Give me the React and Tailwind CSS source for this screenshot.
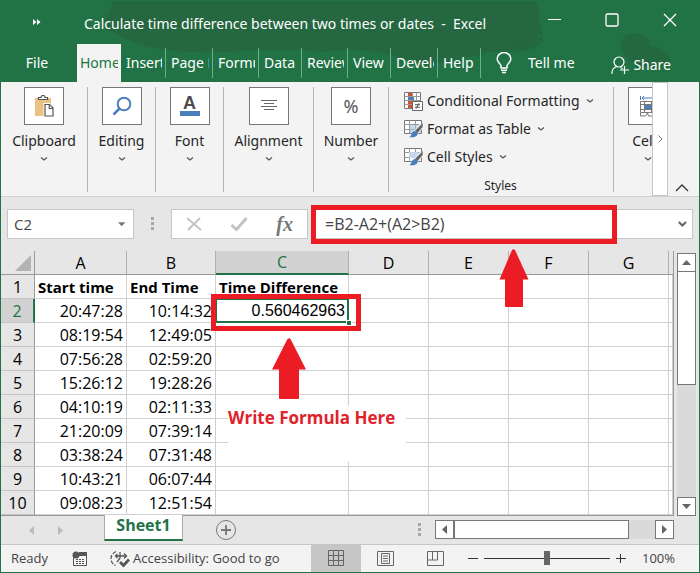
import React, { useState } from 'react';

const TABS = [
    { label: 'Insert', width: 'w-[45px]' },
    { label: 'Page Layout', width: 'w-[47px]' },
    { label: 'Formulas', width: 'w-[46px]' },
    { label: 'Data', width: 'w-[43px]' },
    { label: 'Review', width: 'w-[46px]' },
    { label: 'View', width: 'w-[43px]' },
    { label: 'Developer', width: 'w-[47px]' },
    { label: 'Help', width: 'w-[43px]' },
];

const COLUMNS = ['A', 'B', 'C', 'D', 'E', 'F', 'G'];

const ROWS = [
    ['20:47:28', '10:14:32'],
    ['08:19:54', '12:49:05'],
    ['07:56:28', '02:59:20'],
    ['15:26:12', '19:28:26'],
    ['04:10:19', '02:11:33'],
    ['21:20:09', '07:39:14'],
    ['03:38:24', '07:31:48'],
    ['10:43:21', '06:07:44'],
    ['09:08:23', '12:51:54'],
];

const Chevron = () => (
    <svg width="8" height="6" viewBox="0 0 8 6" fill="none" stroke="#555" strokeWidth="1.3">
        <path d="M1 1.5 4 4 7 1.5" />
    </svg>
);

const Dots = () => (
    <svg width="3" height="14" viewBox="0 0 3 14" fill="#a6a6a6">
        <path d="M0 0h3v3H0zM0 5h3v3H0zM0 10h3v3H0z" />
    </svg>
);

const ClipboardIcon = () => (
    <svg width="20" height="22" viewBox="0 0 20 22" fill="none">
        <path d="M1 3h16v18H1z" fill="#eac282" />
        <path d="M4.500 4.500V2.500H7a2 2 0 0 1 4 0h2.500v2z" fill="#fff" stroke="#555" strokeWidth="1.200" />
        <path d="M11 9.500h4.500l3.500 3.500v8h-8z" fill="#fff" stroke="#fff" strokeWidth="3" />
        <path d="M11 9.500h4.500l3.500 3.500v8h-8z" fill="#fff" stroke="#555" strokeWidth="1.200" />
        <path d="M15.200 9.500v4H19" stroke="#555" strokeWidth="1.100" />
    </svg>
);

const SearchIcon = () => (
    <svg width="20" height="20" viewBox="0 0 20 20" fill="none" stroke="#4a7ebb" strokeWidth="2">
        <circle cx="12" cy="8" r="6.300" />
        <path d="M7.500 12.500 1.500 18.500" strokeWidth="2.500" />
    </svg>
);

const FontIcon = () => (
    <div className="flex w-5 flex-col items-center">
        <span className="h-[15px] font-['Liberation_Sans'] text-lg leading-[15px] font-bold text-[#4d4d4d]">A</span>
        <span className="h-[5px] w-5 bg-[#4a7ebb]" />
    </div>
);

const AlignIcon = () => (
    <svg width="16" height="12" viewBox="0 0 16 12" stroke="#666">
        <path d="M0 .5h16M3 3.500h10M0 6.500h16M3 9.500h10" />
    </svg>
);

const CellsIcon = () => (
    <svg width="18" height="22" viewBox="0 0 18 22" fill="none">
        <path d="M1.500 1v4M16.500 1v4M3 3h12M5 1 3 3l2 2M13 1l2 2-2 2" stroke="#4a7ebb" />
        <path d="M1.500 6.500h15v11h-15zM1.500 9.500h15M1.500 14.500h15M5.500 6.500v11M12.500 6.500v11" stroke="#777" />
        <path d="M6 10h6v4H6z" fill="#4a7ebb" />
        <path d="M1.500 18v3h5l2-3 1 3h5l2-3" stroke="#777" />
    </svg>
);

const GridBase = () => (
    <>
        <path d="M.5.5h17v13H.5z" fill="#fff" stroke="#777" />
        <path d="M.5 4.500h17M.5 9.500h17M5.500.5v13M11.500.5v13" stroke="#999" />
    </>
);

const Brush = () => (
    <>
        <path d="M18.500 4.500 12 12.500" stroke="#f3f3f3" strokeWidth="5" />
        <path d="m18.800 3-.2 4-5 6-2.500-2.200z" fill="#666" />
        <path d="M10.800 11c1.700.2 2.900 1.400 2.900 2.900-.5 2.700-3.700 3.700-8.700 3.300 2-1 2-2.200 3-4 .6-1.300 1.600-2.300 2.800-2.200z" fill="#4a7ebb" />
    </>
);

const ConditionalIcon = () => (
    <svg width="19" height="19" viewBox="0 0 19 19" fill="none">
        <path d="M.5.5h16v16H.5z" fill="#fff" stroke="#777" />
        <path d="M.5 4.500h16M.5 8.500h16M.5 12.500h16M4.500.5v16M12.500.5v16M8.500.5v16" stroke="#999" />
        <path d="M4 1h4v3H4zM4 9h4v3H4zM4 13h4v3H4z" fill="#d2522c" />
        <path d="M4 5h6v3H4z" fill="#4a7ebb" />
        <path d="M8.500 9.500h10v9h-10z" fill="#fff" stroke="#666" />
        <path d="M11 12.700h5M11 15.200h5M15 11.200 12 16.800" stroke="#555" />
    </svg>
);

const FormatTableIcon = () => (
    <svg width="19" height="18" viewBox="0 0 19 18" fill="none">
        <GridBase />
        <path d="M6 5h11v8H6z" fill="#c5d7ea" />
        <path d="M6 9.500h11M11.500 5v8" stroke="#9ab2cc" />
        <Brush />
    </svg>
);

const CellStylesIcon = () => (
    <svg width="19" height="18" viewBox="0 0 19 18" fill="none">
        <GridBase />
        <path d="M5 4h9v6H5z" fill="#c5d7ea" />
        <Brush />
    </svg>
);

const RibbonGroup = ({ label, width, children }) => (
    <div className={`flex shrink-0 flex-col items-center border-r border-[#b5b5b5] ${width}`}>
        <button type="button" className="flex flex-col items-center">
            <span className="flex h-[38px] w-10 items-center justify-center border border-[#767676] bg-white">
                {children}
            </span>
            <span className="mt-1 h-6 text-sm leading-6">{label}</span>
            <span className="mt-[3px]"><Chevron /></span>
        </button>
    </div>
);

const StyleItem = ({ label, icon }) => (
    <button type="button" className="flex h-7 items-center whitespace-nowrap">
        {icon}
        <span className="mr-[6px] ml-1 text-sm">{label}</span>
        <Chevron />
    </button>
);

const Header = () => (
    <header className="relative shrink-0 overflow-hidden bg-[#217346] text-white">
        <svg className="absolute inset-0 h-full w-full" viewBox="0 0 700 82" preserveAspectRatio="none" fill="#25653f">
            <path d="M112 1h422c10 8 2 20 10 34h-5c-12 20-40 10-60 20l-60 12c-20-16-70-20-95-15-60-6-90 2-130 0-50 0-72-15-94-26 6-10 12-18 12-25z" opacity=".85" />
            <path d="M480 46c20 2 44-2 62-9 8 8-18 20-62 13zM622 46c0-20 30-14 28 0 14 0 30 16 16 22-18 6-44-8-44-22z" opacity=".8" />
        </svg>
        <div className="relative flex h-11 items-center pl-8">
            <svg width="8" height="6" viewBox="0 0 8 6" fill="#fff">
                <path d="m0 0 3.500 3L0 6zM4 0l3.500 3L4 6z" />
            </svg>
            <h1 className="ml-[43px] pt-1 text-sm whitespace-pre">Calculate time difference between two times or dates  -  Excel</h1>
            <div className="ml-auto flex items-center gap-11 pr-[22px] pb-1">
                <button type="button" aria-label="Minimize">
                    <svg width="13" height="14" viewBox="0 0 13 14" stroke="#fff"><path d="M0 6.500h13" /></svg>
                </button>
                <button type="button" aria-label="Maximize">
                    <svg width="14" height="14" viewBox="0 0 14 14" fill="none" stroke="#fff" strokeWidth="1.300"><rect x="1" y="1" width="12" height="12" rx="1.500" /></svg>
                </button>
                <button type="button" aria-label="Close">
                    <svg width="14" height="14" viewBox="0 0 14 14" stroke="#fff" strokeWidth="1.300"><path d="m1 1 12 12M13 1 1 13" /></svg>
                </button>
            </div>
        </div>
        <nav className="relative flex h-[38px] text-sm">
            <button type="button" className="w-[76px] shrink-0 pr-1">File</button>
            <button type="button" className="w-11 shrink-0 bg-[#f3f3f3] px-[3px] text-[#217346]">
                <span className="block overflow-hidden text-left">Home</span>
            </button>
            <div className="flex py-1">
                {TABS.map((tab) => (
                    <button key={tab.label} type="button" className={`shrink-0 border-r border-[#6fae8a] pr-[3px] pl-[5px] text-left ${tab.width}`}>
                        <span className="block overflow-hidden whitespace-nowrap">{tab.label}</span>
                    </button>
                ))}
            </div>
            <button type="button" className="ml-[15px] flex items-center gap-4 whitespace-nowrap">
                <svg width="16" height="22" viewBox="0 0 16 22" fill="none" stroke="#fff" strokeWidth="1.500">
                    <path d="M5 16v-2.500C4 11.500 1.200 10 1.200 7a6.600 6.300 0 0 1 13.600 0c0 3-2.800 4.500-3.800 6.500V16zM5 18.300h6M6 20.500h4" />
                </svg>
                Tell me
            </button>
            <button type="button" className="mr-7 ml-auto flex items-center gap-1 pt-1">
                <svg width="18" height="19" viewBox="0 0 18 19" fill="none" stroke="#fff" strokeWidth="1.200">
                    <circle cx="8" cy="6" r="5" />
                    <path d="M.8 18c0-4 2-6.500 4.700-7.500M9.500 11.500c1 .4 1.500.8 2 1.500M13.500 10v8M9 14h9" />
                </svg>
                Share
            </button>
        </nav>
    </header>
);

const Ribbon = () => (
    <section className="flex h-[115px] shrink-0 border-b border-[#d0d0d0] bg-[#f3f3f3] text-[#262626]">
        <div className="flex min-w-0 flex-1 overflow-hidden pt-[5px] pb-1">
            <RibbonGroup label="Clipboard" width="w-[87px]"><ClipboardIcon /></RibbonGroup>
            <RibbonGroup label="Editing" width="w-[68px]"><SearchIcon /></RibbonGroup>
            <RibbonGroup label="Font" width="w-[68px]"><FontIcon /></RibbonGroup>
            <RibbonGroup label="Alignment" width="w-[90px]"><AlignIcon /></RibbonGroup>
            <RibbonGroup label="Number" width="w-[75px]">
                <span className="text-lg text-[#555]">%</span>
            </RibbonGroup>
            <div className="flex w-[225px] shrink-0 flex-col border-r border-[#b5b5b5] pl-[15px]">
                <StyleItem label="Conditional Formatting" icon={<ConditionalIcon />} />
                <StyleItem label="Format as Table" icon={<FormatTableIcon />} />
                <StyleItem label="Cell Styles" icon={<CellStylesIcon />} />
                <span className="mt-auto pr-4 text-center text-xs leading-3">Styles</span>
            </div>
            <RibbonGroup label="Cells" width="w-[68px]"><CellsIcon /></RibbonGroup>
        </div>
        <button type="button" aria-label="Scroll ribbon" className="flex w-4 items-center justify-center border border-[#c6c6c6] bg-white">
            <svg width="5" height="8" viewBox="0 0 5 8" fill="none" stroke="#777"><path d="m.5.5 3.500 3.500L.5 7.500" /></svg>
        </button>
        <button type="button" aria-label="Collapse ribbon" className="flex w-[31px] items-end justify-center pr-1 pb-1">
            <svg width="14" height="8" viewBox="0 0 14 8" fill="none" stroke="#333" strokeWidth="1.300"><path d="m1 7 6-6 6 6" /></svg>
        </button>
    </section>
);

const FormulaBar = () => {
    const [formula, setFormula] = useState('=B2-A2+(A2>B2)');

    return (
        <section className="relative flex h-[54px] shrink-0 items-start pt-3 pr-[6px] pl-[6px] text-[#444]">
            <div className="flex h-[30px] w-[127px] shrink-0 items-center border border-[#c6c6c6] bg-white pr-2 pl-[6px]">
                <input aria-label="Name box" defaultValue="C2" className="w-full min-w-0 text-[15px] outline-none" />
                <svg width="8" height="5" viewBox="0 0 8 5" fill="#777"><path d="M0 0h8L4 4.500z" /></svg>
            </div>
            <div className="flex h-[30px] w-[37px] shrink-0 items-center justify-center"><Dots /></div>
            <div className="flex h-[30px] w-[137px] shrink-0 items-center justify-between border border-[#c6c6c6] bg-white px-[14px]">
                <button type="button" aria-label="Cancel">
                    <svg width="16" height="14" viewBox="0 0 16 14" stroke="#c3c3c3" strokeWidth="2"><path d="m1 1 14 12M14 1 2 13" /></svg>
                </button>
                <button type="button" aria-label="Enter">
                    <svg width="18" height="14" viewBox="0 0 18 14" fill="none" stroke="#c3c3c3" strokeWidth="3"><path d="m1.500 8 5 4.500L16.500 1" /></svg>
                </button>
                <button type="button" className="font-['Liberation_Serif'] text-xl leading-5 font-bold text-[#777] italic">fx</button>
            </div>
            <div className="ml-1 flex h-[30px] min-w-0 flex-1 items-center border border-[#c6c6c6] bg-white pr-[5px] pl-3">
                <input
                    aria-label="Formula"
                    className="w-full min-w-0 text-base outline-none"
                    value={formula}
                    onChange={(e) => setFormula(e.target.value)}
                />
                <svg width="9" height="6" viewBox="0 0 9 6" fill="none" stroke="#666" strokeWidth="2.200"><path d="m.8 1 3.700 3.500L8.200 1" /></svg>
            </div>
            {/* Formula highlight and its arrow */}
            <div className="pointer-events-none absolute top-2 left-[310px] h-[39px] w-[306px] border-[5px] border-[#ec1c24]" />
            <svg className="pointer-events-none absolute top-[52px] left-[498px] z-10" width="30" height="58" viewBox="0 0 30 58" fill="#ec1c24">
                <path d="M13 1q1.500-1.500 3 0l13.500 29.500H24V57q0 1-1 1H7q-1 0-1-1V30.500H.5z" />
            </svg>
        </section>
    );
};

const ResultCell = () => (
    <td className="relative border-r border-b border-[#d0d0d0] pr-[3px] text-right font-['Liberation_Sans'] text-base/5">
        0.560462963
        <div className="absolute -inset-px border-2 border-[#217346]" />
        <div className="absolute -right-1 -bottom-1 h-[6px] w-[6px] border border-white bg-[#217346]" />
        <div className="absolute -top-[5px] -left-[5px] h-[37px] w-[150px] border-[5px] border-[#ec1c24]" />
        <svg className="absolute top-[39px] left-14" width="34" height="61" viewBox="0 0 34 61" fill="#ec1c24">
            <path d="M15.500 1q1.500-1.500 3 0L34 31.500h-7V60q0 1-1 1H8q-1 0-1-1V31.500H0z" />
        </svg>
        <div className="absolute top-[107px] left-3 h-14 w-[178px] bg-white text-left font-['Open_Sans'] text-[17px] leading-6 font-bold whitespace-nowrap text-[#e0222c]">
            Write Formula Here
        </div>
    </td>
);

const Sheet = () => (
    <div className="min-w-0 flex-1 border-r border-b border-[#999]">
        <table className="w-full table-fixed border-separate border-spacing-0 text-base/5 text-black">
            <colgroup>
                <col className="w-[34px]" />
                <col className="w-[92px]" />
                <col className="w-[89px]" />
                <col className="w-[133px]" />
                <col className="w-20" />
                <col className="w-20" />
                <col className="w-20" />
                <col className="w-20" />
                <col />
            </colgroup>
            <thead>
                <tr className="h-6 bg-[#e6e6e6]">
                    <th className="border-r border-b border-[#999] p-0">
                        <svg className="mr-[3px] ml-auto" width="16" height="16" viewBox="0 0 16 16" fill="#b4b4b4"><path d="M16 0v16H0z" /></svg>
                    </th>
                    {COLUMNS.map((name) => (
                        <th
                            key={name}
                            scope="col"
                            className={name === 'C'
                                ? 'border-r border-b-2 border-r-[#b0b0b0] border-b-[#217346] bg-[#d2d2d2] p-0 font-normal text-[#217346]'
                                : 'border-r border-b border-r-[#b0b0b0] border-b-[#999] p-0 font-normal'}
                        >
                            {name}
                        </th>
                    ))}
                    <th className="border-b border-[#999] p-0" />
                </tr>
            </thead>
            <tbody className="bg-white">
                <tr className="h-6 text-left">
                    <th scope="row" className="border-r border-b border-r-[#999] border-b-[#c4c4c4] bg-[#e6e6e6] p-0 text-center font-normal">1</th>
                    {['Start time', 'End Time', 'Time Difference', '', '', '', '', ''].map((text, i) => (
                        <td key={i} className="border-r border-b border-[#d0d0d0] py-0 pr-0 pl-[3px] text-[15px] leading-5 font-bold whitespace-nowrap">{text}</td>
                    ))}
                </tr>
                {ROWS.map((row, i) => (
                    <tr key={row[0]} className="h-6">
                        <th
                            scope="row"
                            className={i === 0
                                ? 'border-r-2 border-b border-r-[#217346] border-b-[#c4c4c4] bg-[#d2d2d2] p-0 font-normal text-[#217346]'
                                : 'border-r border-b border-r-[#999] border-b-[#c4c4c4] bg-[#e6e6e6] p-0 font-normal'}
                        >
                            {i + 2}
                        </th>
                        {row.map((time) => (
                            <td key={time} className="border-r border-b border-[#d0d0d0] py-0 pr-[3px] pl-0 text-right">{time}</td>
                        ))}
                        {i === 0 ? <ResultCell /> : <td className="border-r border-b border-[#d0d0d0]" />}
                        {[0, 1, 2, 3, 4].map((n) => (
                            <td key={n} className="border-r border-b border-[#d0d0d0] p-0" />
                        ))}
                    </tr>
                ))}
            </tbody>
        </table>
    </div>
);

const ScrollButton = ({ label, path }) => (
    <button type="button" aria-label={label} className="flex h-[19px] w-[19px] shrink-0 items-center justify-center border border-[#777] bg-white">
        <svg width="9" height="9" viewBox="0 0 9 9" fill="#666"><path d={path} /></svg>
    </button>
);

const SheetBar = () => (
    <div className="flex h-[29px] shrink-0 items-start border-b border-[#c6c6c6]">
        <div className="flex h-7 w-[103px] shrink-0 items-center gap-6 pl-7">
            <svg width="5" height="9" viewBox="0 0 5 9" fill="#bbb"><path d="M5 0v9L0 4.500z" /></svg>
            <svg width="5" height="9" viewBox="0 0 5 9" fill="#bbb"><path d="M0 0v9l5-4.500z" /></svg>
        </div>
        <button type="button" className="-mt-px h-[26px] w-[79px] shrink-0 border-x border-b-2 border-x-[#aaa] border-b-[#217346] bg-white pb-1 text-base/5 font-bold text-[#217346]">Sheet1</button>
        <button type="button" aria-label="New sheet" className="mt-[3px] ml-8">
            <svg width="22" height="22" viewBox="0 0 22 22" fill="none" stroke="#777"><circle cx="11" cy="11" r="9.500" /><path d="M6 11h10M11 6v10" strokeWidth="1.800" /></svg>
        </button>
        <div className="ml-auto flex items-center pt-1 pr-[25px]">
            <Dots />
            <div className="ml-[14px] flex bg-[#dadada]">
                <ScrollButton label="Scroll left" path="M7 0v9L2 4.500z" />
                <div className="mr-[26px] h-[19px] w-[175px] border border-[#777] bg-white" />
                <ScrollButton label="Scroll right" path="M2 0v9l5-4.500z" />
            </div>
        </div>
    </div>
);

const StatusBar = () => {
    const [zoom, setZoom] = useState(100);

    return (
        <footer className="flex h-[27px] shrink-0 items-center bg-[#f3f3f3] text-[13px] text-[#444]">
            <span className="ml-[10px]">Ready</span>
            <svg className="ml-6 shrink-0" width="16" height="16" viewBox="0 0 16 16" fill="none">
                <path d="M1.500 6v8.500h13v-12H7" stroke="#555" />
                <path d="M7 1h8v4H7z" fill="#555" />
                <circle cx="4" cy="4" r="3.500" fill="#555" />
                <path d="M4 8.500h8M4 10.500h8M4 12.500h8" stroke="#555" strokeDasharray="2 1" />
            </svg>
            <button type="button" className="ml-[22px] flex items-center gap-[3px] whitespace-nowrap">
                <svg width="20" height="18" viewBox="0 0 20 18" fill="none" stroke="#555" strokeWidth="1.300">
                    <path d="M6 1.500C3 3 1 5.500 1 8.500s1.500 5.500 4.500 7" strokeDasharray="4 1.500" />
                    <path d="M5 6h11M7.500 4 5.500 6l2 2M14 3.500 16.500 6 14 8.500M10 2v6l-3 4" />
                    <path d="m10 12 3.500 3.500L19 9.500" strokeWidth="2.800" />
                </svg>
                Accessibility: Good to go
            </button>
            <div className="ml-auto flex h-full items-center">
                <button type="button" aria-label="Normal view" className="flex h-full w-[50px] items-center justify-center bg-[#c6c6c6]">
                    <svg width="17" height="17" viewBox="0 0 17 17" fill="none" stroke="#666"><path d="M.5.500h15v15H.5zM.5 5.500h15M.5 10.500h15M5.500.5v15M10.500.5v15" /></svg>
                </button>
                <button type="button" aria-label="Page layout view" className="ml-4">
                    <svg width="17" height="15" viewBox="0 0 17 15" fill="none" stroke="#666"><path d="M.5.500h16v14H.5zM4.500 2.500h8v10h-8zM6 5h5M6 7.500h5M6 10h5" /></svg>
                </button>
                <button type="button" aria-label="Page break view" className="ml-[33px]">
                    <svg width="17" height="15" viewBox="0 0 17 15" fill="none" stroke="#666"><path d="M.5.500h16v14H.5zM.5 9h10V.5M5.500.5V9" /></svg>
                </button>
                <button type="button" aria-label="Zoom out" className="ml-6">
                    <svg width="10" height="10" viewBox="0 0 10 10" stroke="#333"><path d="M0 4.500h10" /></svg>
                </button>
                <input
                    type="range"
                    aria-label="Zoom"
                    min="0"
                    max="200"
                    value={zoom}
                    onChange={(e) => setZoom(Number(e.target.value))}
                    className="mx-[6px] h-4 w-[126px] appearance-none bg-transparent [&::-webkit-slider-runnable-track]:h-px [&::-webkit-slider-runnable-track]:bg-[#333] [&::-webkit-slider-thumb]:-mt-[7px] [&::-webkit-slider-thumb]:h-[14px] [&::-webkit-slider-thumb]:w-[6px] [&::-webkit-slider-thumb]:appearance-none [&::-webkit-slider-thumb]:bg-[#666]"
                />
                <button type="button" aria-label="Zoom in">
                    <svg width="10" height="10" viewBox="0 0 10 10" stroke="#333"><path d="M0 4.500h10M4.500 0v9" /></svg>
                </button>
                <span className="w-[73px] pl-4">{zoom}%</span>
            </div>
        </footer>
    );
};

const App = () => (
    <main className="flex w-full flex-col border border-t-0 border-[#217346] bg-[#e6e6e6] font-['Open_Sans',sans-serif]">
        <div className="flex flex-col font-['Noto_Sans',sans-serif]">
            <Header />
            <Ribbon />
        </div>
        <FormulaBar />
        <div className="flex shrink-0">
            <Sheet />
            <div className="mt-[2px] mr-[3px] ml-[3px] flex w-[19px] flex-col bg-[#dadada]">
                <ScrollButton label="Scroll up" path="M0 7h9L4.500 2z" />
                <div className="h-[113px] w-full border border-t-0 border-[#777] bg-white" />
                <div className="flex-1" />
                <ScrollButton label="Scroll down" path="M0 2h9L4.500 7z" />
            </div>
        </div>
        <SheetBar />
        <StatusBar />
    </main>
);

export default App;
